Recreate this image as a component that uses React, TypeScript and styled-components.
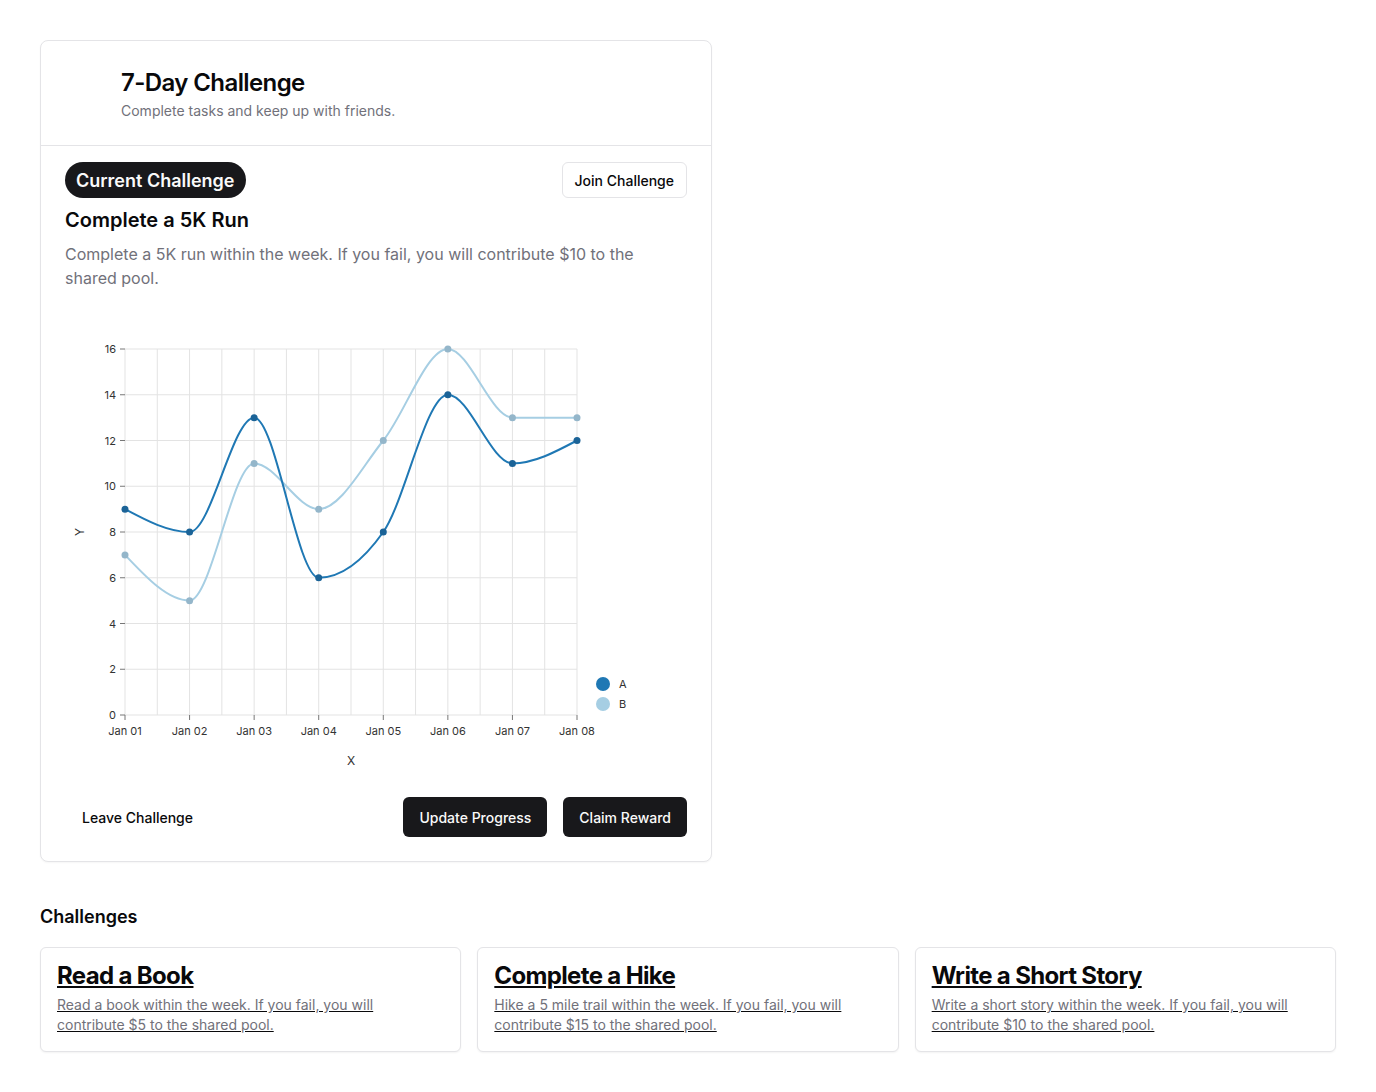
import React from "react";
import styled, { createGlobalStyle } from "styled-components";

const GlobalStyle = createGlobalStyle`
  html, body { margin: 0; padding: 0; background: #ffffff; }
  body { font-family: Inter, "Noto Sans", "Liberation Sans", sans-serif; color: #09090b; -webkit-font-smoothing: antialiased; }
  * { box-sizing: border-box; }
`;

const Page = styled.div`
  padding: 40px;
  display: flex;
  flex-direction: column;
`;

const Card = styled.section`
  width: 672px;
  border: 1px solid #e4e4e7;
  border-radius: 8px;
  background: #fff;
  box-shadow: 0 1px 2px rgba(0, 0, 0, 0.04);
`;

const Header = styled.header`
  padding: 26px 24px 24px 80px;
  border-bottom: 1px solid #e4e4e7;
  display: flex;
  flex-direction: column;
`;

const Title = styled.h1`
  margin: 0;
  font-size: 24px;
  line-height: 32px;
  font-weight: 600;
  letter-spacing: -0.6px;
`;

const Subtitle = styled.p`
  margin: 2px 0 0;
  font-size: 14px;
  line-height: 20px;
  color: #71717a;
`;

const Body = styled.div`
  padding: 16px 24px 24px;
  display: flex;
  flex-direction: column;
`;

const TopRow = styled.div`
  display: flex;
  justify-content: space-between;
  align-items: center;
`;

const Pill = styled.span`
  display: inline-flex;
  align-items: center;
  height: 36px;
  padding: 0 11px;
  border-radius: 999px;
  background: #18181b;
  color: #fafafa;
  font-size: 18px;
  font-weight: 600;
`;

const Button = styled.button<{ $variant: "primary" | "outline" | "ghost"; $h?: number }>`
  font-family: inherit;
  font-size: 14px;
  font-weight: 500;
  height: ${(p) => p.$h ?? 40}px;
  padding: 0 ${(p) => (p.$variant === "outline" ? 12 : p.$variant === "ghost" ? 16 : 15)}px;
  border-radius: 6px;
  cursor: pointer;
  border: 1px solid ${(p) => (p.$variant === "outline" ? "#e4e4e7" : "transparent")};
  background: ${(p) => (p.$variant === "primary" ? "#18181b" : "#fff")};
  color: ${(p) => (p.$variant === "primary" ? "#fafafa" : "#09090b")};
`;

const TaskTitle = styled.h2`
  margin: 8px 0 0;
  font-size: 20px;
  line-height: 28px;
  font-weight: 600;
`;

const TaskDesc = styled.p`
  margin: 8px 0 0;
  font-size: 16px;
  line-height: 24px;
  color: #71717a;
  max-width: 580px;
`;

const ChartBox = styled.div`
  margin-top: 8px;
  height: 480px;
`;

const Footer = styled.div`
  margin-top: 19px;
  display: flex;
  align-items: center;
  gap: 16px;
`;

const Spacer = styled.div`
  flex: 1;
`;

const SectionTitle = styled.h3`
  margin: 41px 0 16px;
  font-size: 18px;
  line-height: 28px;
  font-weight: 600;
`;

const Grid = styled.div`
  display: grid;
  grid-template-columns: repeat(3, 1fr);
  gap: 16px;
`;

const MiniCard = styled.a`
  display: flex;
  flex-direction: column;
  padding: 12px 16px 16px;
  border: 1px solid #e4e4e7;
  border-radius: 6px;
  background: #fff;
  box-shadow: 0 1px 2px rgba(0, 0, 0, 0.05);
  color: inherit;
  text-decoration: underline;
`;

const MiniTitle = styled.span`
  font-size: 24px;
  line-height: 32px;
  font-weight: 700;
  letter-spacing: -0.65px;
  color: #09090b;
`;

const MiniDesc = styled.span`
  margin-top: 3px;
  font-size: 14px;
  line-height: 20px;
  color: #71717a;
  max-width: 384px;
`;

type Pt = [number, number];

function monotonePath(pts: Pt[]): string {
  const n = pts.length;
  const t: number[] = new Array(n).fill(0);
  const sign = (v: number) => (v < 0 ? -1 : 1);
  for (let i = 1; i < n - 1; i++) {
    const [x0, y0] = pts[i - 1];
    const [x1, y1] = pts[i];
    const [x2, y2] = pts[i + 1];
    const h0 = x1 - x0;
    const h1 = x2 - x1;
    const s0 = (y1 - y0) / h0;
    const s1 = (y2 - y1) / h1;
    const p = (s0 * h1 + s1 * h0) / (h0 + h1);
    t[i] = (sign(s0) + sign(s1)) * Math.min(Math.abs(s0), Math.abs(s1), 0.5 * Math.abs(p)) || 0;
  }
  {
    const h = pts[1][0] - pts[0][0];
    t[0] = (3 * (pts[1][1] - pts[0][1]) / h - t[1]) / 2;
    const hl = pts[n - 1][0] - pts[n - 2][0];
    t[n - 1] = (3 * (pts[n - 1][1] - pts[n - 2][1]) / hl - t[n - 2]) / 2;
  }
  let d = `M${pts[0][0]},${pts[0][1]}`;
  for (let i = 0; i < n - 1; i++) {
    const [x0, y0] = pts[i];
    const [x1, y1] = pts[i + 1];
    const dx = (x1 - x0) / 3;
    d += `C${x0 + dx},${y0 + dx * t[i]},${x1 - dx},${y1 - dx * t[i + 1]},${x1},${y1}`;
  }
  return d;
}

const seriesA = [9, 8, 13, 6, 8, 14, 11, 12];
const seriesB = [7, 5, 11, 9, 12, 16, 13, 13];
const days = ["Jan 01", "Jan 02", "Jan 03", "Jan 04", "Jan 05", "Jan 06", "Jan 07", "Jan 08"];

const ML = 60;
const MT = 51;
const PW = 452;
const PH = 366;

const xAt = (i: number) => ML + (i * PW) / 7;
const yAt = (v: number) => MT + PH - (v * PH) / 16;

const tickText = { fontSize: 11, fill: "#333", fontFamily: "Inter, 'Noto Sans', sans-serif" };

function Chart() {
  const ptsA: Pt[] = seriesA.map((v, i) => [xAt(i), yAt(v)]);
  const ptsB: Pt[] = seriesB.map((v, i) => [xAt(i), yAt(v)]);
  const yTicks = [0, 2, 4, 6, 8, 10, 12, 14, 16];
  const vGrid = Array.from({ length: 15 }, (_, k) => ML + (k * PW) / 14);
  return (
    <svg width="621" height="480" viewBox="0 0 621 480">
      <g stroke="#e3e3e3" strokeWidth="1">
        {vGrid.map((x, k) => (
          <line key={"v" + k} x1={x} x2={x} y1={MT} y2={MT + PH} />
        ))}
        {yTicks.map((v) => (
          <line key={"h" + v} x1={ML} x2={ML + PW} y1={yAt(v)} y2={yAt(v)} />
        ))}
      </g>
      <g stroke="#777" strokeWidth="1">
        {yTicks.map((v) => (
          <line key={"yt" + v} x1={ML - 5} x2={ML} y1={yAt(v)} y2={yAt(v)} />
        ))}
        {days.map((_, i) => (
          <line key={"xt" + i} x1={xAt(i)} x2={xAt(i)} y1={MT + PH} y2={MT + PH + 5} />
        ))}
      </g>
      {yTicks.map((v) => (
        <text key={"yl" + v} x={ML - 9} y={yAt(v)} textAnchor="end" dominantBaseline="central" style={tickText}>
          {v}
        </text>
      ))}
      {days.map((d, i) => (
        <text key={"xl" + i} x={xAt(i)} y={MT + PH + 16} textAnchor="middle" dominantBaseline="central" style={tickText}>
          {d}
        </text>
      ))}
      <text x={ML + PW / 2} y={MT + PH + 45} textAnchor="middle" dominantBaseline="central" style={{ ...tickText, fontSize: 12 }}>
        X
      </text>
      <text
        transform={`translate(14, ${MT + PH / 2}) rotate(-90)`}
        textAnchor="middle"
        dominantBaseline="central"
        style={{ ...tickText, fontSize: 12 }}
      >
        Y
      </text>
      <path d={monotonePath(ptsB)} fill="none" stroke="#a6cee3" strokeWidth="2" />
      <path d={monotonePath(ptsA)} fill="none" stroke="#1f78b4" strokeWidth="2" />
      {ptsB.map(([x, y], i) => (
        <circle key={"pb" + i} cx={x} cy={y} r="3.5" fill="#94b6ca" />
      ))}
      {ptsA.map(([x, y], i) => (
        <circle key={"pa" + i} cx={x} cy={y} r="3.5" fill="#1b6397" />
      ))}
      <circle cx={538} cy={386} r="7" fill="#1f78b4" />
      <text x={554} y={386} dominantBaseline="central" style={{ ...tickText, fontSize: 11 }}>
        A
      </text>
      <circle cx={538} cy={406} r="7" fill="#a6cee3" />
      <text x={554} y={406} dominantBaseline="central" style={{ ...tickText, fontSize: 11 }}>
        B
      </text>
    </svg>
  );
}

const challenges = [
  { title: "Read a Book", desc: "Read a book within the week. If you fail, you will contribute $5 to the shared pool." },
  { title: "Complete a Hike", desc: "Hike a 5 mile trail within the week. If you fail, you will contribute $15 to the shared pool." },
  { title: "Write a Short Story", desc: "Write a short story within the week. If you fail, you will contribute $10 to the shared pool." },
];

export default function App() {
  return (
    <>
      <GlobalStyle />
      <Page>
        <Card>
          <Header>
            <Title>7-Day Challenge</Title>
            <Subtitle>Complete tasks and keep up with friends.</Subtitle>
          </Header>
          <Body>
            <TopRow>
              <Pill>Current Challenge</Pill>
              <Button $variant="outline" $h={36}>Join Challenge</Button>
            </TopRow>
            <TaskTitle>Complete a 5K Run</TaskTitle>
            <TaskDesc>
              Complete a 5K run within the week. If you fail, you will contribute $10 to the shared pool.
            </TaskDesc>
            <ChartBox>
              <Chart />
            </ChartBox>
            <Footer>
              <Button $variant="ghost">Leave Challenge</Button>
              <Spacer />
              <Button $variant="primary">Update Progress</Button>
              <Button $variant="primary">Claim Reward</Button>
            </Footer>
          </Body>
        </Card>
        <SectionTitle>Challenges</SectionTitle>
        <Grid>
          {challenges.map((c) => (
            <MiniCard key={c.title} href="#">
              <MiniTitle>{c.title}</MiniTitle>
              <MiniDesc>{c.desc}</MiniDesc>
            </MiniCard>
          ))}
        </Grid>
      </Page>
    </>
  );
}
